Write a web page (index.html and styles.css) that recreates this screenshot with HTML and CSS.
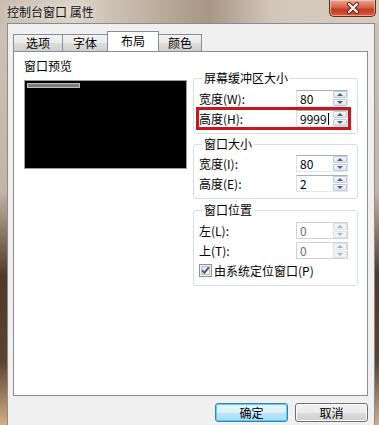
FILE: index.html
```html
<!DOCTYPE html>
<html>

<head>
  <meta charset="utf-8">
  <link rel="stylesheet" href="styles.css">
</head>

<body>
  <div class="window">
    <div class="titlebar">
      <span class="title">控制台窗口 属性</span>
      <div class="close-btn">
        <svg width="20" height="12" viewBox="0 0 20 12">
          <path d="M6 2 L14 10 M14 2 L6 10" stroke="#5a2a20" stroke-width="4" stroke-linecap="round" />
          <path d="M6 2 L14 10 M14 2 L6 10" stroke="#ffffff" stroke-width="2" stroke-linecap="round" />
        </svg>
      </div>
    </div>

    <div class="client">
      <div class="tabs">
        <div class="tab tab-1">选项</div>
        <div class="tab tab-2">字体</div>
        <div class="tab tab-active">布局</div>
        <div class="tab tab-4">颜色</div>
      </div>

      <div class="panel">
        <div class="preview">
          <div class="preview-label">窗口预览</div>
          <div class="preview-box">
            <div class="preview-bar"></div>
          </div>
        </div>

        <div class="groups">
          <fieldset class="group group-buffer">
            <legend>屏幕缓冲区大小</legend>
            <div class="row">
              <span>宽度(W):</span>
              <div class="spin">
                <span class="spin-value">80</span>
                <span class="arrows"><i class="up"></i><i class="down"></i></span>
              </div>
            </div>
            <div class="row row-marked">
              <span>高度(H):</span>
              <div class="spin">
                <span class="spin-value">9999<span class="caret"></span></span>
                <span class="arrows"><i class="up"></i><i class="down"></i></span>
              </div>
            </div>
          </fieldset>

          <fieldset class="group group-size">
            <legend>窗口大小</legend>
            <div class="row">
              <span>宽度(I):</span>
              <div class="spin">
                <span class="spin-value">80</span>
                <span class="arrows"><i class="up"></i><i class="down"></i></span>
              </div>
            </div>
            <div class="row">
              <span>高度(E):</span>
              <div class="spin">
                <span class="spin-value">2</span>
                <span class="arrows"><i class="up"></i><i class="down"></i></span>
              </div>
            </div>
          </fieldset>

          <fieldset class="group group-pos">
            <legend>窗口位置</legend>
            <div class="row">
              <span>左(L):</span>
              <div class="spin disabled">
                <span class="spin-value">0</span>
                <span class="arrows"><i class="up"></i><i class="down"></i></span>
              </div>
            </div>
            <div class="row">
              <span>上(T):</span>
              <div class="spin disabled">
                <span class="spin-value">0</span>
                <span class="arrows"><i class="up"></i><i class="down"></i></span>
              </div>
            </div>
            <div class="check-row">
              <svg class="checkbox" width="13" height="13" viewBox="0 0 13 13">
                <defs>
                  <linearGradient id="cbg" x1="0" y1="0" x2="1" y2="1">
                    <stop offset="0" stop-color="#d8d8d8" />
                    <stop offset="1" stop-color="#ffffff" />
                  </linearGradient>
                </defs>
                <rect x="0.5" y="0.5" width="12" height="12" fill="#f4f4f4" stroke="#8e8f8f" />
                <rect x="2.5" y="2.5" width="8" height="8" fill="url(#cbg)" stroke="#c3c3c3" />
                <path d="M3.2 6.3 L5.4 8.8 L9.8 3.4" fill="none" stroke="#3c4f85" stroke-width="1.8" />
              </svg>
              <span>由系统定位窗口(P)</span>
            </div>
          </fieldset>
        </div>
      </div>

      <div class="buttons">
        <button class="btn btn-default">确定</button>
        <button class="btn">取消</button>
      </div>
    </div>
  </div>
</body>

</html>
```

FILE: styles.css
```css
body {
  margin: 0;
  padding: 0;
  font-family: "Noto Sans CJK SC", "Liberation Sans", sans-serif;
  font-size: 12px;
  color: #000;
  overflow: hidden;
}

.window {
  width: 379px;
  height: 425px;
  display: flex;
  flex-direction: column;
  background: linear-gradient(180deg, #cfc4b8 0%, #c2b4a6 45%, #4e3a2b 65%, #5a4331 85%, #d4ad88 100%);
}

.titlebar {
  height: 23px;
  display: flex;
  justify-content: space-between;
  align-items: flex-start;
  background: linear-gradient(90deg, #c9bdb1 0%, #dcd2c8 20%, #b6a797 45%, #a89685 55%, #d2c6ba 72%, #d8ccc0 100%);
}

.title {
  margin: 4px 0 0 7px;
  line-height: 16px;
  color: #111;
  text-shadow: 0 0 6px rgba(255, 255, 255, 0.8);
}

.close-btn {
  width: 45px;
  height: 16px;
  margin-right: 3px;
  display: flex;
  align-items: center;
  justify-content: center;
  border: 1px solid #5b2c22;
  border-top: none;
  border-radius: 0 0 5px 5px;
  background: linear-gradient(180deg, #e9a996 0%, #d5644b 45%, #c33a22 60%, #d85a3c 100%);
  box-shadow: inset 0 0 0 1px rgba(255, 210, 190, 0.6);
}

.client {
  flex: 1;
  margin: 0 4px 0 7px;
  padding: 7px 6px 0 5px;
  background: #f0f0f0;
  border: 1px solid #8c8c8c;
  border-bottom: none;
}

.tabs {
  display: flex;
  align-items: flex-end;
  height: 19px;
}

.tab {
  height: 17px;
  line-height: 16px;
  text-align: center;
  border: 1px solid #898c95;
  border-bottom: none;
  background: linear-gradient(180deg, #f2f2f2 0%, #ebebeb 50%, #dddddd 51%, #cfcfcf 100%);
  box-sizing: border-box;
  margin-bottom: -1px;
}

.tab-1 {
  width: 50px;
}

.tab-2 {
  width: 46px;
  margin-left: -1px;
}

.tab-active {
  width: 52px;
  height: 20px;
  line-height: 18px;
  margin: 0 -1px -1px -1px;
  background: #fff;
  position: relative;
  z-index: 1;
}

.tab-4 {
  width: 44px;
}

.panel {
  height: 345px;
  box-sizing: border-box;
  margin-top: 1px;
  background: #fff;
  border: 1px solid #898c95;
  padding: 7px 9px 0 10px;
  display: flex;
  gap: 6px;
}

.preview {
  width: 163px;
}

.preview-label {
  line-height: 14px;
  margin-bottom: 7px;
}

.preview-box {
  height: 89px;
  box-sizing: border-box;
  background: #000;
  border: 1px solid #9c9c9c;
  padding: 2px;
}

.preview-bar {
  width: 53px;
  height: 5px;
  box-sizing: border-box;
  background: #7c7c7c;
  border: 1px solid #bdbdbd;
}

.groups {
  width: 165px;
  margin-top: 12px;
  display: flex;
  flex-direction: column;
}

.group {
  margin: 0;
  border: 1px solid #d5dfe5;
  border-radius: 3px;
  padding: 5px 9px 6px 5px;
  min-width: 0;
}

.group legend {
  line-height: 14px;
  padding: 0 2px;
  margin-left: 3px;
}

.group-size {
  margin-top: 3px;
  padding-top: 4px;
}

.group-pos {
  margin-top: 4px;
}

.row {
  height: 17px;
  display: flex;
  align-items: center;
  justify-content: space-between;
  margin-bottom: 3px;
  line-height: 14px;
}

.row-marked {
  outline: 3px solid #c8161d;
  margin-bottom: 0;
}

.group-size .row:last-child {
  margin-bottom: 0;
}

.spin {
  width: 52px;
  height: 17px;
  box-sizing: border-box;
  border: 1px solid #abadb3;
  border-left-color: #dbdfe6;
  border-right-color: #dbdfe6;
  border-bottom-color: #e3e9ef;
  display: flex;
  justify-content: space-between;
  background: #fff;
}

.spin-value {
  padding-left: 3px;
  line-height: 15px;
  display: flex;
  align-items: center;
}

.caret {
  display: inline-block;
  width: 1px;
  height: 12px;
  background: #000;
  margin-left: 1px;
}

.arrows {
  width: 14px;
  display: flex;
  flex-direction: column;
  gap: 1px;
  padding: 0 0 0 0;
}

.arrows i {
  flex: 1;
  display: flex;
  align-items: center;
  justify-content: center;
  background: linear-gradient(180deg, #f3f6fa 0%, #dde4ee 100%);
  border: 1px solid #c2cbd8;
  border-radius: 1px;
}

.arrows i::after {
  content: "";
  width: 0;
  height: 0;
  border-left: 3px solid transparent;
  border-right: 3px solid transparent;
}

.arrows .up::after {
  border-bottom: 3px solid #4d5f80;
}

.arrows .down::after {
  border-top: 3px solid #4d5f80;
}

.spin.disabled {
  border-color: #d0d2d6;
  color: #6d6d6d;
}

.spin.disabled .arrows i {
  background: #f2f3f5;
  border-color: #dcdfe4;
}

.spin.disabled .arrows .up::after {
  border-bottom-color: #a9b1be;
}

.spin.disabled .arrows .down::after {
  border-top-color: #a9b1be;
}

.check-row {
  height: 17px;
  margin-top: 3px;
  display: flex;
  align-items: center;
  gap: 2px;
  line-height: 14px;
}

.buttons {
  margin-top: 7px;
  display: flex;
  justify-content: flex-end;
  gap: 7px;
}

.btn {
  width: 73px;
  height: 19px;
  padding: 0;
  font-family: inherit;
  font-size: 12px;
  line-height: 14px;
  color: #000;
  border: 1px solid #707070;
  border-radius: 3px;
  background: linear-gradient(180deg, #f2f2f2 0%, #ebebeb 50%, #dddddd 51%, #cfcfcf 100%);
  box-shadow: inset 0 0 0 1px #fbfbfb;
}

.btn-default {
  border-color: #3c7fb1;
  box-shadow: inset 0 0 0 1px #48d4f8;
  background: linear-gradient(180deg, #eaf6fd 0%, #d9f0fc 50%, #bee6fd 51%, #a7d9f5 100%);
}
```
